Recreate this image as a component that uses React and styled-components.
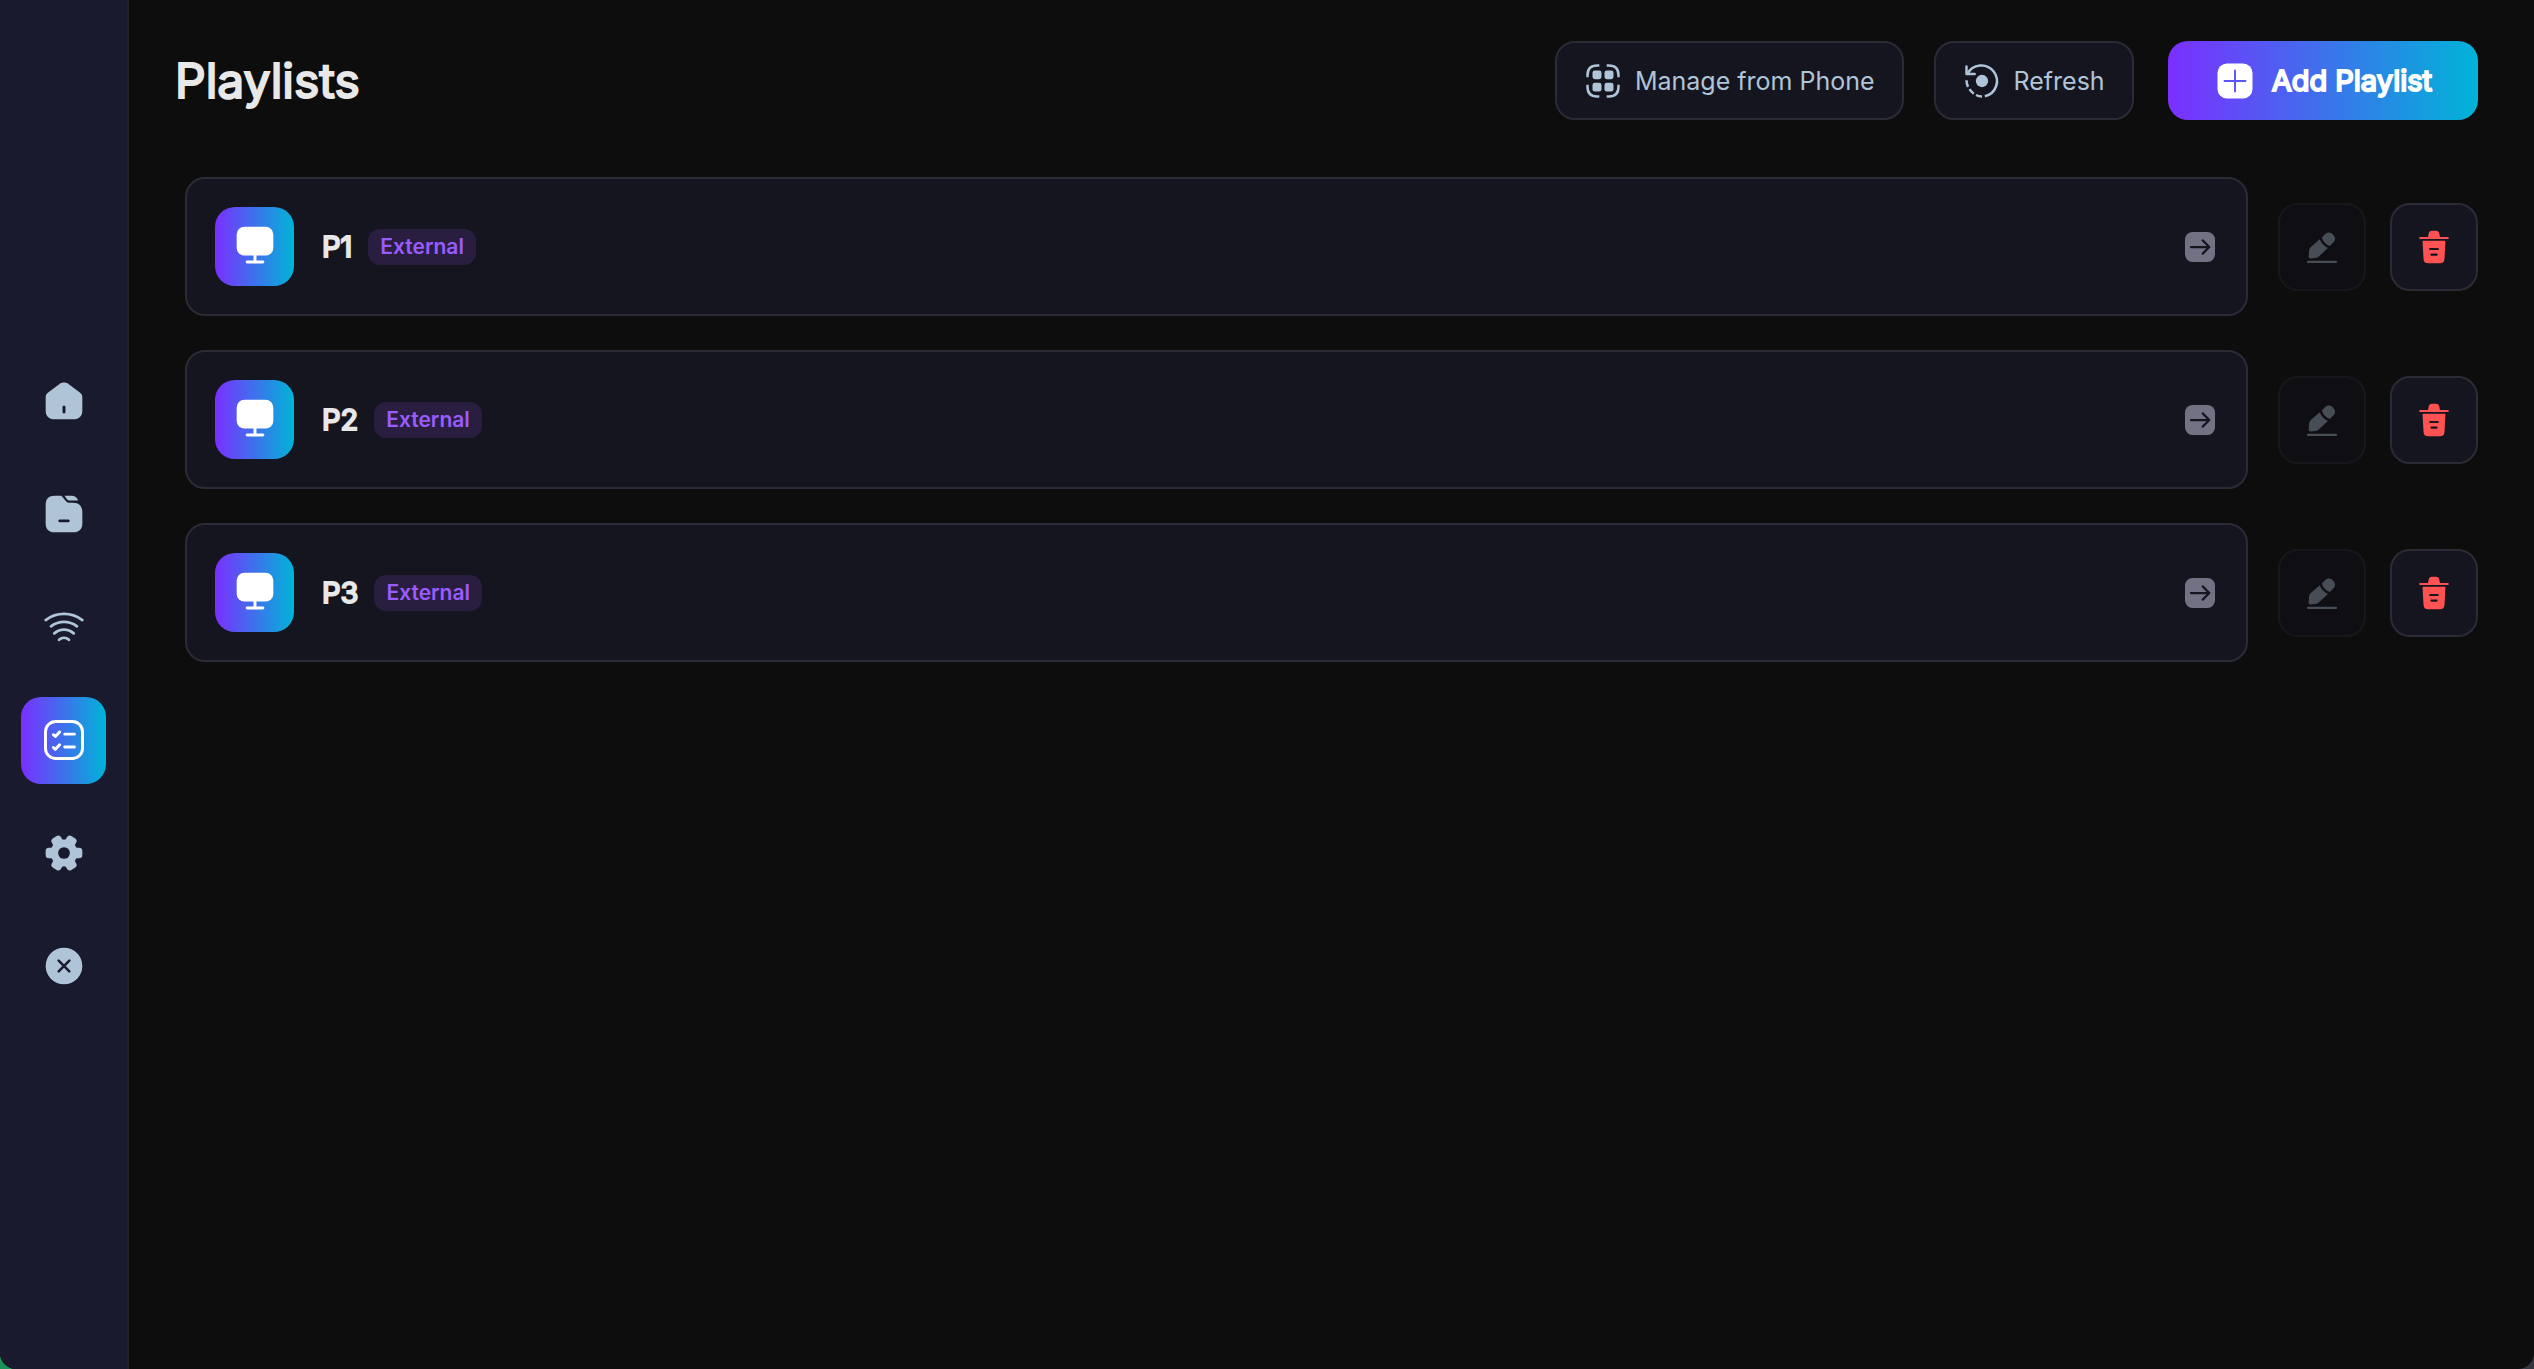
import styled, { createGlobalStyle, css } from 'styled-components';

const gradient = 'linear-gradient(90deg, #7b2fff 0%, #00b4d8 100%)';

const playlists = [
    { id: 1, name: 'P1', type: 'External' },
    { id: 2, name: 'P2', type: 'External' },
    { id: 3, name: 'P3', type: 'External' },
];

const navItems = [
    { label: 'Home', icon: HomeIcon },
    { label: 'Files', icon: FolderIcon },
    { label: 'Network', icon: WifiIcon },
    { label: 'Playlists', icon: ChecklistIcon, active: true },
    { label: 'Settings', icon: SettingsIcon },
    { label: 'Exit', icon: CloseIcon },
];

function App() {
    return (
        <>
            <GlobalStyle />
            <SApp>
                <SSidebar aria-label="Main">
                    {navItems.map(({ label, icon: Icon, active }) => (
                        <SNavButton key={label} type="button" aria-label={label} $active={active}>
                            <Icon />
                        </SNavButton>
                    ))}
                </SSidebar>
                <SMain>
                    <SHeader>
                        <STitle>Playlists</STitle>
                        <SActions>
                            <SButton type="button">
                                <QrIcon />
                                Manage from Phone
                            </SButton>
                            <SButton type="button">
                                <RefreshIcon />
                                Refresh
                            </SButton>
                            <SPrimaryButton type="button">
                                <AddIcon />
                                Add Playlist
                            </SPrimaryButton>
                        </SActions>
                    </SHeader>
                    <SList>
                        {playlists.map((playlist) => (
                            <Playlist key={playlist.id} playlist={playlist} />
                        ))}
                    </SList>
                </SMain>
            </SApp>
        </>
    );
}

function Playlist({ playlist }) {
    return (
        <SRow>
            <SCard type="button">
                <STile>
                    <MonitorIcon />
                </STile>
                <SName>{playlist.name}</SName>
                <SBadge>{playlist.type}</SBadge>
                <ArrowIcon />
            </SCard>
            <SRowActions>
                <SIconButton type="button" aria-label={`Edit ${playlist.name}`} disabled>
                    <PenIcon />
                </SIconButton>
                <SIconButton type="button" aria-label={`Delete ${playlist.name}`} $danger>
                    <TrashIcon />
                </SIconButton>
            </SRowActions>
        </SRow>
    );
}

function HomeIcon() {
    return (
        <SIcon $size={44} viewBox="0 0 24 24">
            <path
                fillRule="evenodd"
                d="M2 10.2C2 8.6 2.5 8 3.7 7.1L9.4 2.8C10.9 1.7 13.1 1.7 14.6 2.8L20.3 7.1C21.5 8 22 8.6 22 10.2V17C22 20.3 20.3 22 17 22H7C3.7 22 2 20.3 2 17ZM12 14.4C11.5 14.4 11.2 14.8 11.2 15.3V17.9C11.2 18.4 11.5 18.8 12 18.8C12.5 18.8 12.8 18.4 12.8 17.9V15.3C12.8 14.8 12.5 14.4 12 14.4Z"
            />
        </SIcon>
    );
}

function FolderIcon() {
    return (
        <SIcon $size={44} viewBox="0 0 24 24">
            <path
                fillRule="evenodd"
                d="M2 7C2 3.7 3.7 2 7 2H9.7C10.4 2 10.8 2.2 11.3 2.8L13.1 5.1C13.5 5.6 13.9 5.8 14.6 5.8H17C20.3 5.8 22 7.8 22 11V17C22 20.3 20.3 22 17 22H7C3.7 22 2 20.3 2 17ZM9.7 15C9.2 15 8.9 15.3 8.9 15.75C8.9 16.2 9.2 16.5 9.7 16.5H14.3C14.8 16.5 15.1 16.2 15.1 15.75C15.1 15.3 14.8 15 14.3 15Z"
            />
            <path d="M12.3 2H16C17.9 2 19.2 3 19.7 4.6H14.7C14.2 4.6 13.9 4.4 13.6 4Z" />
        </SIcon>
    );
}

function WifiIcon() {
    return (
        <SIcon $size={44} viewBox="0 0 24 24">
            <g fill="none" stroke="currentColor" strokeWidth="1.5" strokeLinecap="round">
                <path d="M2 8.2C8 3.7 16 3.7 22 8.2" />
                <path d="M4.9 11.6C9.3 8.4 14.7 8.4 19.1 11.6" />
                <path d="M6.7 15.5C9.9 12.8 14.1 12.8 17.3 15.5" />
                <path d="M9.3 19C10.9 17.5 13.1 17.5 14.7 19" />
            </g>
        </SIcon>
    );
}

function ChecklistIcon() {
    return (
        <SIcon $size={44} viewBox="0 0 24 24">
            <g fill="none" stroke="currentColor" strokeWidth="1.6" strokeLinecap="round" strokeLinejoin="round">
                <rect x="1.9" y="1.9" width="20.2" height="20.2" rx="5.6" />
                <path d="M6.2 9.1L7.3 10.1L9.6 7.6M6.2 16.1L7.3 17.1L9.6 14.6M12.4 8.8H17.7M12.4 15.8H17.7" />
            </g>
        </SIcon>
    );
}

function SettingsIcon() {
    return (
        <SIcon $size={44} viewBox="0 0 24 24">
            <circle cx="12" cy="12" r="7.3" />
            {[0, 60, 120].map((angle) => (
                <rect key={angle} x="2" y="9.1" width="20" height="5.8" rx="1.8" transform={`rotate(${angle} 12 12)`} />
            ))}
            <circle cx="12" cy="12" r="3.2" fill="#1a1a2e" />
        </SIcon>
    );
}

function CloseIcon() {
    return (
        <SIcon $size={44} viewBox="0 0 24 24">
            <circle cx="12" cy="12" r="10" />
            <path d="M9.1 9.1L14.9 14.9M14.9 9.1L9.1 14.9" stroke="#1a1a2e" strokeWidth="1.4" strokeLinecap="round" />
        </SIcon>
    );
}

function QrIcon() {
    return (
        <SIcon $size={40} viewBox="0 0 24 24">
            <path
                fill="none"
                stroke="currentColor"
                strokeWidth="1.5"
                d="M2.7 9.8V8.5C2.7 4.7 4.7 2.7 8.5 2.7H9.8M14.2 2.7H15.5C19.3 2.7 21.3 4.7 21.3 8.5V9.8M21.3 14.2V15.5C21.3 19.3 19.3 21.3 15.5 21.3H14.2M9.8 21.3H8.5C4.7 21.3 2.7 19.3 2.7 15.5V14.2"
            />
            <rect x="5.7" y="5.7" width="5.4" height="5.2" rx="1.4" />
            <rect x="12.9" y="5.7" width="5.4" height="5.2" rx="1.4" />
            <rect x="5.7" y="13.1" width="5.4" height="5.2" rx="1.4" />
            <rect x="12.9" y="13.1" width="5.4" height="5.2" rx="1.4" />
        </SIcon>
    );
}

function RefreshIcon() {
    return (
        <SIcon $size={40} viewBox="0 0 24 24">
            <circle cx="12" cy="12" r="3.7" />
            <g fill="none" stroke="currentColor" strokeWidth="1.5" strokeLinejoin="round">
                <path d="M3.2 7.8A9.4 9.4 0 1 1 13.7 21.2" />
                <path d="M2.7 3.3V7.8H7.6" strokeLinecap="round" />
                <path d="M2.7 11.5C2.7 13 3 14.3 3.6 15.5M4.5 16.9C5.2 18 6.1 18.9 7.1 19.6M8.4 20.4C9.5 21 10.7 21.3 12 21.3" />
            </g>
        </SIcon>
    );
}

function AddIcon() {
    return (
        <SIcon $size={42} viewBox="0 0 24 24">
            <rect x="2" y="2" width="20" height="20" rx="5.4" />
            <path d="M12 6V18M6 12H18" stroke="#5b55f6" strokeWidth="1.1" strokeLinecap="round" />
        </SIcon>
    );
}

function MonitorIcon() {
    return (
        <SIcon $size={44} viewBox="0 1 24 24">
            <rect x="2" y="2" width="20" height="15.7" rx="4.2" />
            <path d="M12 17V21.2M7.7 21.2H16.3" stroke="currentColor" strokeWidth="1.6" strokeLinecap="round" />
        </SIcon>
    );
}

function ArrowIcon() {
    return (
        <SArrow $size={36} viewBox="0 0 24 24">
            <rect x="2" y="2" width="20" height="20" rx="5" />
            <path
                d="M6 12H18M13.8 7.6L18.2 12L13.8 16.4"
                fill="none"
                stroke="#15151f"
                strokeWidth="1.5"
                strokeLinecap="round"
                strokeLinejoin="round"
            />
        </SArrow>
    );
}

function PenIcon() {
    return (
        <SIcon $size={36} viewBox="0 0 24 24">
            <path d="M2.7 21.9H21.3" stroke="currentColor" strokeWidth="1.6" strokeLinecap="round" />
            <path d="M3.4 14.5C3.5 13.5 3.8 12.9 4.4 12.2L10.5 6.9C11.4 9.5 13.2 11.4 15.9 12.6L10 18.2C9.2 18.9 8.5 19.2 7.4 19.3L4.6 19.6C3.6 19.7 3 19.2 3.1 18.2Z" />
            <path d="M11.9 5.6L14.2 3.4C15.8 1.9 17.9 2.1 19.5 3.8C21.1 5.5 21.1 7.4 19.5 9L17.2 11.3C14.6 10.4 12.7 8.4 11.9 5.6Z" />
        </SIcon>
    );
}

function TrashIcon() {
    return (
        <SIcon $size={36} viewBox="0 0 24 24">
            <path d="M2.8 6H21.2" stroke="currentColor" strokeWidth="1.4" strokeLinecap="round" />
            <path d="M7.9 5.5C8.2 5 8.2 4.4 8.4 3.4C8.7 1.9 9.4 1.2 10.7 1.2H13.3C14.6 1.2 15.3 1.9 15.6 3.4C15.8 4.4 15.8 5 16.1 5.5Z" />
            <path
                fillRule="evenodd"
                d="M5.1 7.9H18.9C19.4 7.9 19.7 8.1 19.6 8.6L19 19.7C18.9 21.9 18 22.9 15.8 22.9H8.2C6 22.9 5.1 21.9 5 19.7L4.4 8.6C4.4 8.1 4.6 7.9 5.1 7.9ZM9.5 12.6C8.5 12.6 8.5 14 9.5 14H14.5C15.5 14 15.5 12.6 14.5 12.6ZM10.3 16.4C9.3 16.4 9.3 17.8 10.3 17.8H13.7C14.7 17.8 14.7 16.4 13.7 16.4Z"
            />
        </SIcon>
    );
}

const GlobalStyle = createGlobalStyle`
    * {
        box-sizing: border-box;
    }

    /* Visible only behind the rounded bottom corners of the window */
    body {
        margin: 0;
        background: linear-gradient(90deg, #17935a 50%, #33353f 50%);
        color: #e8e8e8;
        font-family: Inter, "Liberation Sans", sans-serif;
    }

    button {
        margin: 0;
        font-family: inherit;
        cursor: pointer;
    }
`;

const surface = css`
    border: 2px solid #2b2b36;
    border-radius: 20px;
    background: #15151f;
`;

// Regular letterforms with a heavier outline
const emboldened = css`
    font-weight: 400;
    -webkit-text-stroke: 2px currentColor;
`;

const SApp = styled.div`
    display: flex;
    min-height: 100vh;
    border-radius: 0 0 16px 16px;
    overflow: hidden;
    background: #0d0d0d;
`;

const SSidebar = styled.nav`
    flex: none;
    width: 129px;
    padding: 0 21px 2px;
    display: flex;
    flex-direction: column;
    justify-content: center;
    gap: 26px;
    border-right: 2px solid #222226;
    background: #1a1a2e;
`;

const SNavButton = styled.button`
    display: flex;
    align-items: center;
    justify-content: center;
    height: 87px;
    padding: 0;
    border: none;
    border-radius: 20px;
    background: ${({ $active }) => ($active ? gradient : 'none')};
    color: ${({ $active }) => ($active ? '#ffffff' : '#b0c4d8')};
`;

const SMain = styled.main`
    flex: 1;
    padding: 41px 56px 40px 46px;
`;

const SHeader = styled.header`
    display: flex;
    align-items: center;
    justify-content: space-between;
`;

const STitle = styled.h1`
    ${emboldened}
    margin: 0;
    font-size: 48px;
    line-height: 60px;
`;

const SActions = styled.div`
    display: flex;
    align-items: center;
    gap: 30px;
`;

const SButton = styled.button`
    ${surface}
    display: flex;
    align-items: center;
    gap: 12px;
    height: 79px;
    padding: 0 27px 0 26px;
    color: #b0c4d8;
    font-size: 25px;
`;

const SPrimaryButton = styled(SButton)`
    ${emboldened}
    gap: 16px;
    margin-left: 4px;
    padding: 0 46px;
    border: none;
    background: ${gradient};
    color: #ffffff;
    font-size: 29px;
`;

const SList = styled.ul`
    display: flex;
    flex-direction: column;
    gap: 34px;
    margin: 57px 0 0;
    padding: 0 0 0 10px;
    list-style: none;
`;

const SRow = styled.li`
    display: flex;
    align-items: center;
    gap: 30px;
`;

const SCard = styled.button`
    ${surface}
    flex: 1;
    display: flex;
    align-items: center;
    padding: 28px;
    color: #e8e8e8;
    text-align: left;
`;

const STile = styled.span`
    display: flex;
    align-items: center;
    justify-content: center;
    width: 79px;
    height: 79px;
    border-radius: 20px;
    background: ${gradient};
    color: #ffffff;
`;

const SName = styled.span`
    ${emboldened}
    margin: 0 16px 0 28px;
    font-size: 29px;
    line-height: 36px;
`;

const SBadge = styled.span`
    padding: 0 12px;
    border-radius: 12px;
    background: #291e40;
    color: #9b5cff;
    font-size: 21px;
    line-height: 36px;
    font-weight: 600;
`;

const SRowActions = styled.div`
    display: flex;
    gap: 24px;
`;

const SIconButton = styled.button`
    ${surface}
    display: flex;
    align-items: center;
    justify-content: center;
    width: 88px;
    height: 88px;
    padding: 0;
    color: ${({ $danger }) => ($danger ? '#ff5252' : '#b0c4d8')};

    &:disabled {
        opacity: 0.35;
        cursor: default;
    }
`;

const SIcon = styled.svg.attrs({ 'aria-hidden': true })`
    flex: none;
    width: ${({ $size }) => $size}px;
    height: ${({ $size }) => $size}px;
    fill: currentColor;
`;

const SArrow = styled(SIcon)`
    margin-left: auto;
    color: #737285;
`;

export default App;
